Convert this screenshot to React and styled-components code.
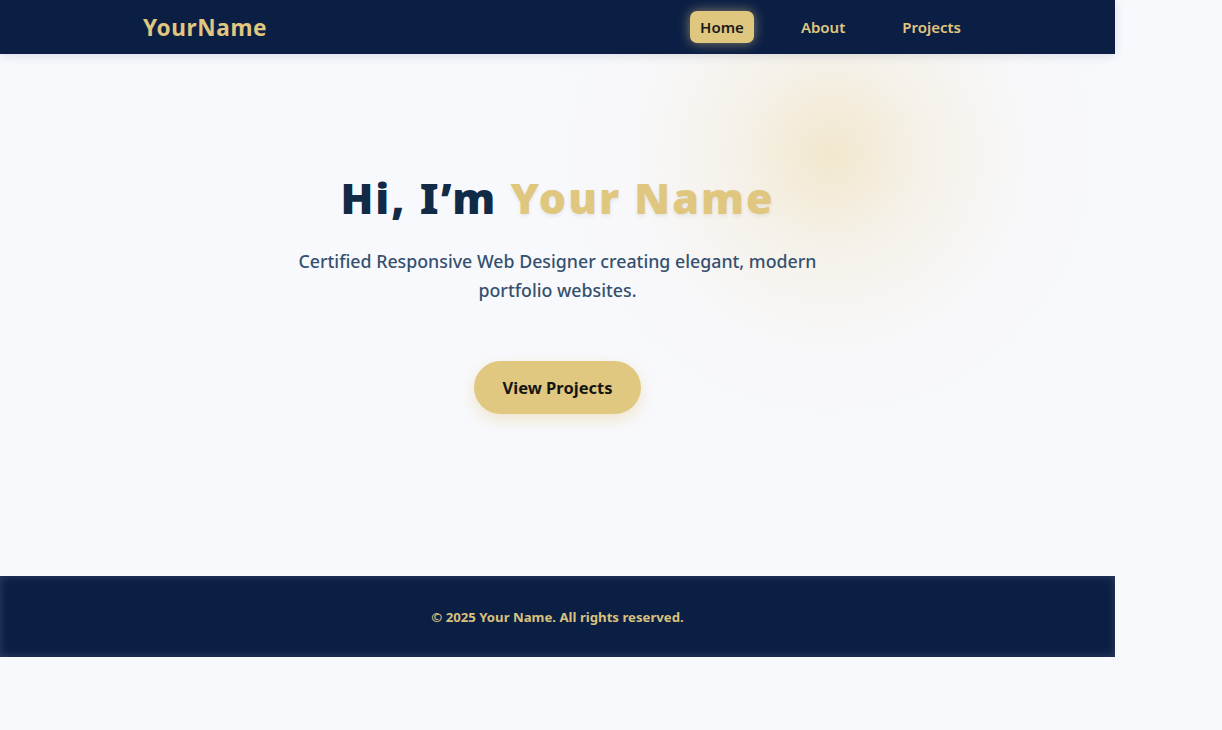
import React from "react";
import styled, { createGlobalStyle } from "styled-components";

const GlobalStyle = createGlobalStyle`
  html, body {
    margin: 0;
    padding: 0;
    background: #f8f9fd;
    font-family: "Noto Sans", "Open Sans", sans-serif;
  }
  * { box-sizing: border-box; }
`;

const Page = styled.div`
  width: 1115px;
  min-height: 730px;
  display: flex;
  flex-direction: column;
`;

const Header = styled.header`
  height: 54px;
  background: #0b1f45;
  display: flex;
  align-items: center;
  justify-content: space-between;
  padding: 0 144px 0 143px;
  box-shadow: 0 2px 10px rgba(11, 31, 69, 0.12);
  position: relative;
  z-index: 2;
`;

const Logo = styled.div`
  color: #e0c77f;
  font-size: 22.6px;
  font-weight: 700;
  letter-spacing: 0.6px;
`;

const Nav = styled.nav`
  display: flex;
  align-items: center;
  gap: 37px;
`;

const NavLink = styled.a`
  display: inline-flex;
  align-items: center;
  height: 32px;
  padding: 0 10px;
  border-radius: 7px;
  font-size: 15px;
  font-weight: 600;
  text-decoration: none;
  cursor: pointer;
  color: ${(p) => (p.$active ? "#1a1a1a" : "#e0c77f")};
  background: ${(p) => (p.$active ? "#e0c77f" : "transparent")};
  box-shadow: ${(p) => (p.$active ? "0 0 12px rgba(224, 199, 127, 0.6)" : "none")};
`;

const Hero = styled.section`
  height: 522px;
  display: flex;
  flex-direction: column;
  align-items: center;
  padding-top: 117px;
  background:
    radial-gradient(circle at 74.5% 19%, rgba(236, 214, 160, 0.5) 0px, rgba(240, 225, 190, 0.3) 100px, rgba(245, 240, 230, 0.14) 200px, rgba(248, 249, 253, 0) 300px),
    #f8f9fd;
`;

const Title = styled.h1`
  margin: 0;
  font-size: 43px;
  font-weight: 900;
  letter-spacing: 2px;
  color: #112a46;
  line-height: 54px;
`;

const Accent = styled.span`
  color: #e0c77f;
  text-shadow: 0 2px 4px rgba(0, 0, 0, 0.08);
`;

const Subtitle = styled.p`
  margin: 22px 0 0;
  width: 540px;
  text-align: center;
  font-size: 17.8px;
  line-height: 29px;
  font-weight: 500;
  color: #34506e;
`;

const Button = styled.a`
  margin-top: 56px;
  display: inline-flex;
  align-items: center;
  justify-content: center;
  width: 167px;
  height: 53px;
  border-radius: 27px;
  background: #e0c880;
  color: #151515;
  font-size: 16.5px;
  font-weight: 700;
  text-decoration: none;
  box-shadow: 0 6px 16px rgba(224, 199, 127, 0.4);
  cursor: pointer;
`;

const Footer = styled.footer`
  height: 81px;
  background: #0b1f45;
  display: flex;
  align-items: center;
  justify-content: center;
  box-shadow: inset 0 0 10px rgba(255, 255, 255, 0.15);
`;

const FooterText = styled.p`
  margin: 0;
  color: #d9c17c;
  font-size: 13.2px;
  font-weight: 700;
`;

export default function App() {
  return (
    <>
      <GlobalStyle />
      <Page>
        <Header>
          <Logo>YourName</Logo>
          <Nav>
            <NavLink $active>Home</NavLink>
            <NavLink>About</NavLink>
            <NavLink>Projects</NavLink>
          </Nav>
        </Header>
        <Hero>
          <Title>
            Hi, I’m <Accent>Your Name</Accent>
          </Title>
          <Subtitle>
            Certified Responsive Web Designer creating elegant, modern portfolio websites.
          </Subtitle>
          <Button>View Projects</Button>
        </Hero>
        <Footer>
          <FooterText>© 2025 Your Name. All rights reserved.</FooterText>
        </Footer>
      </Page>
    </>
  );
}
